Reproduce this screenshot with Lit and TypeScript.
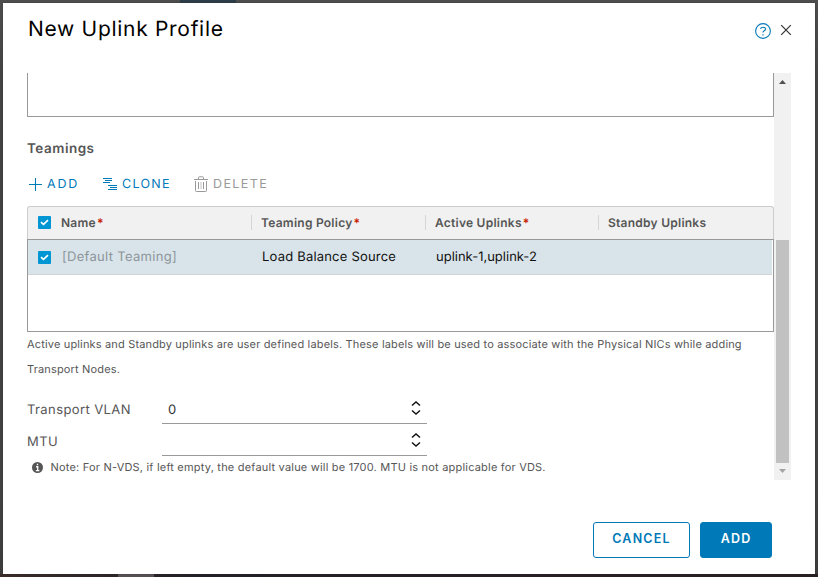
import { LitElement, html, css } from "lit";
import { customElement } from "lit/decorators.js";

const check = html`<svg class="check" width="13" height="13" viewBox="0 0 13 13">
  <rect width="13" height="13" rx="1" fill="#0095d3" />
  <path d="M3 6.1 L5.5 8.4 L10 4.2" fill="none" stroke="#fff" stroke-width="1.7" />
</svg>`;

const spinner = html`<svg class="spin" width="10" height="14" viewBox="0 0 10 14">
  <path d="M1 4.6 L5 1 L9 4.6 M1 9.4 L5 13 L9 9.4" fill="none" stroke="#111" stroke-width="1.4" />
</svg>`;

@customElement("app-root")
export class AppRoot extends LitElement {
  static styles = css`
    :host {
      display: block;
      box-sizing: border-box;
      width: 818px;
      height: 577px;
      position: relative;
      overflow: hidden;
      background: linear-gradient(#4d4d4d, #434343 80px, #414141 500px, #3c3c3c);
      padding: 3px;
      font-family: Inter, "Liberation Sans", sans-serif;
      text-rendering: geometricPrecision;
      color: #565656;
    }
    * { box-sizing: border-box; }
    svg { display: block; flex: none; }
    .tab-top { position: absolute; left: 180px; top: 0; width: 56px; height: 3px; background: #2d3d47; }
    .strip { position: absolute; left: 0; bottom: 0; width: 818px; height: 3px; background: linear-gradient(90deg, #3a2c28, #2c2528 110px, #221f26 200px, #2a2024); }
    .tab-bottom { position: absolute; left: 118px; bottom: 0; width: 36px; height: 3px; background: #555053; }
    .dialog {
      width: 812px;
      height: 571px;
      background: #fff;
      display: flex;
      flex-direction: column;
      box-shadow: 0 0 1px #2b2b2b;
      position: relative;
    }
    header { height: 70px; flex: none; display: flex; padding: 0 23px 0 25px; }
    h1 { margin: 12px auto 0 0; font-size: 21px; line-height: 30px; font-weight: 400; color: #000; letter-spacing: .7px; white-space: nowrap; }
    .help { margin: 20px 9px 0 0; }
    .close { margin-top: 21px; }
    .scroll { height: 407px; flex: none; display: flex; margin-left: 24px; width: 764px; }
    .content { width: 747px; display: flex; flex-direction: column; }
    .box { height: 44px; border: 1px solid #999; border-top: 0; flex: none; }
    h2 { margin: 22px 0 0; font-size: 13.5px; line-height: 20px; font-weight: 600; letter-spacing: .5px; }
    .tools { display: flex; height: 20px; margin-top: 15px; padding-left: 1px; align-items: center; color: #0079b8; font-size: 12.5px; line-height: 18px; }
    .tool { display: flex; align-items: center; }
    .tool span { padding-top: 2px; }
    .tool.add { width: 75px; gap: 5px; letter-spacing: 1.8px; }
    .tool.clone { width: 91px; gap: 5px; letter-spacing: 1.3px; }
    .tool.delete { color: #9a9a9a; gap: 5px; letter-spacing: 1.4px; }
    .head { height: 33px; margin-top: 12px; background: #f1f1f1; border: 1px solid #ccc; border-bottom: 0; border-radius: 3px 3px 0 0; }
    .cols { display: grid; grid-template-columns: 33px 200px 174px 173px 1fr; align-items: center; }
    .head .cols { font-size: 12px; font-weight: 600; height: 32px; letter-spacing: .25px; }
    .cell { line-height: 16px; white-space: nowrap; position: relative; }
    .head .sep::before { content: ""; position: absolute; left: -10px; top: 0; width: 1px; height: 15px; background: #d5d5d5; }
    .req { color: #c92100; margin-left: 1px; }
    .check { margin-left: 9px; }
    .head .check { margin: -2px 0 0 9.5px; }
    .grid { height: 93px; border: 1px solid #999; padding-right: 1px; }
    .row { height: 35px; background: #d9e4ea; border-bottom: 1px solid #d2d5d7; color: #111; font-size: 13px; }
    .row .check { margin-left: 10px; }
    .row .cols { height: 34px; }
    .row .cell { left: 1px; }
    .row .dim { color: #8c959a; letter-spacing: .3px; }
    .row .policy { letter-spacing: .2px; }
    .row .active { letter-spacing: 0; }
    .desc { margin: 0; font-size: 11px; line-height: 25px; letter-spacing: .16px; white-space: nowrap; }
    .field { display: flex; height: 32px; font-size: 13px; line-height: 18px; }
    .vlan { margin-top: 10px; }
    .label { width: 135px; padding-top: 9px; letter-spacing: .4px; }
    .input { width: 265px; height: 32px; border-bottom: 1px solid #999; padding: 9px 6px 0 6px; display: flex; justify-content: space-between; color: #333; }
    .note { display: flex; align-items: center; gap: 8px; padding-left: 4.5px; height: 22px; font-size: 11px; letter-spacing: .2px; white-space: nowrap; }
    .bar { width: 17px; height: 407px; background: #f1f1f1; display: flex; flex-direction: column; align-items: center; }
    .up { margin-top: 7px; }
    .thumb { width: 13px; height: 223px; margin-top: 156px; background: #c1c1c1; }
    .down { margin-top: 6px; }
    footer { display: flex; gap: 10px; justify-content: flex-end; padding: 42px 43px 0 0; }
    button { height: 36px; padding: 0 0 2px; border: 1px solid #0079b8; border-radius: 3px; font: 600 12.5px/16px Inter, sans-serif; letter-spacing: 1.2px; color: #0079b8; background: #fff; }
    .cancel { width: 97px; }
    .primary { width: 72px; background: #0079b8; color: #fff; }
  `;

  render() {
    return html`
      <div class="tab-top"></div><div class="strip"></div><div class="tab-bottom"></div>
      <div class="dialog">
        <header>
          <h1>New Uplink Profile</h1>
          <svg class="help" width="16" height="16" viewBox="0 0 16 16" fill="none" stroke="#0079b8">
            <circle cx="8" cy="8" r="7.4" stroke-width="1.1" />
            <path d="M5.5 5.8 Q5.8 4.2 8 4.2 Q10.5 4.2 10.5 6.1 Q10.5 7.3 8.9 8 Q8 8.5 8 9.6" stroke-width="1.1" />
            <path d="M8 11.3 V12.5" stroke-width="1.2" />
          </svg>
          <svg class="close" width="12" height="12" viewBox="0 0 12 12">
            <path d="M1.2 1.2 L10.8 10.8 M10.8 1.2 L1.2 10.8" stroke="#333" stroke-width="1.2" />
          </svg>
        </header>
        <div class="scroll">
          <div class="content">
            <div class="box"></div>
            <h2>Teamings</h2>
            <div class="tools">
              <span class="tool add">
                <svg width="14" height="14" viewBox="0 0 14 14"><path d="M7.5 1 V14 M1 7.5 H14" stroke="#0079b8" stroke-width="1.1" /></svg><span>ADD</span></span>
              <span class="tool clone">
                <svg width="14" height="14" viewBox="0 0 14 14"><path d="M0 1.5 H9 M2 3.5 H9 M0 5.5 H7 M5 8.5 H14 M7 10.5 H14 M5 12.5 H14" stroke="#0079b8" stroke-width="1.1" /></svg><span>CLONE</span></span>
              <span class="tool delete">
                <svg width="14" height="16" viewBox="0 0 14 16" fill="none" stroke="#9a9a9a"><path d="M0 3.5 H14 M4.5 3 V1.5 Q4.5 .8 5.2 .8 H8.8 Q9.5 .8 9.5 1.5 V3 M1.5 5 V14.7 Q1.5 15.5 2.3 15.5 H11.7 Q12.5 15.5 12.5 14.7 V5 M4.5 6 V13 M9.5 6 V13" /><path d="M7 6 V13" stroke-width=".6" /></svg><span>DELETE</span></span>
            </div>
            <div class="head"><div class="cols">
              ${check}
              <div class="cell">Name<span class="req">*</span></div>
              <div class="cell sep"><span>Teaming Policy</span><span class="req">*</span></div>
              <div class="cell sep"><span>Active Uplinks</span><span class="req">*</span></div>
              <div class="cell sep">Standby Uplinks</div>
            </div></div>
            <div class="grid"><div class="row"><div class="cols">
              ${check}
              <div class="cell dim">[Default Teaming]</div>
              <div class="cell policy">Load Balance Source</div>
              <div class="cell active">uplink-1,uplink-2</div>
            </div></div></div>
            <p class="desc">Active uplinks and Standby uplinks are user defined labels. These labels will be used to associate with the Physical NICs while adding<br />Transport Nodes.</p>
            <div class="field vlan"><span class="label">Transport VLAN</span><div class="input"><span>0</span>${spinner}</div></div>
            <div class="field"><span class="label">MTU</span><div class="input"><span></span>${spinner}</div></div>
            <div class="note">
              <svg width="11" height="11" viewBox="0 0 10 10"><circle cx="5" cy="5" r="5" fill="#565656" /><path d="M5 1.5 V3 M3.7 4.3 H5.2 V7.7 M3.5 7.8 H6.7" stroke="#fff" stroke-width="1.2" fill="none" /></svg>
              <span>Note: For N-VDS, if left empty, the default value will be 1700. MTU is not applicable for VDS.</span>
            </div>
          </div>
          <div class="bar">
            <svg class="up" width="7" height="4" viewBox="0 0 7 4"><path d="M0 4 L3.5 0 L7 4Z" fill="#505050" /></svg>
            <div class="thumb"></div>
            <svg class="down" width="7" height="4" viewBox="0 0 7 4"><path d="M0 0 L3.5 4 L7 0Z" fill="#a3a3a3" /></svg>
          </div>
        </div>
        <footer><button class="cancel">CANCEL</button><button class="primary">ADD</button></footer>
      </div>
    `;
  }
}
